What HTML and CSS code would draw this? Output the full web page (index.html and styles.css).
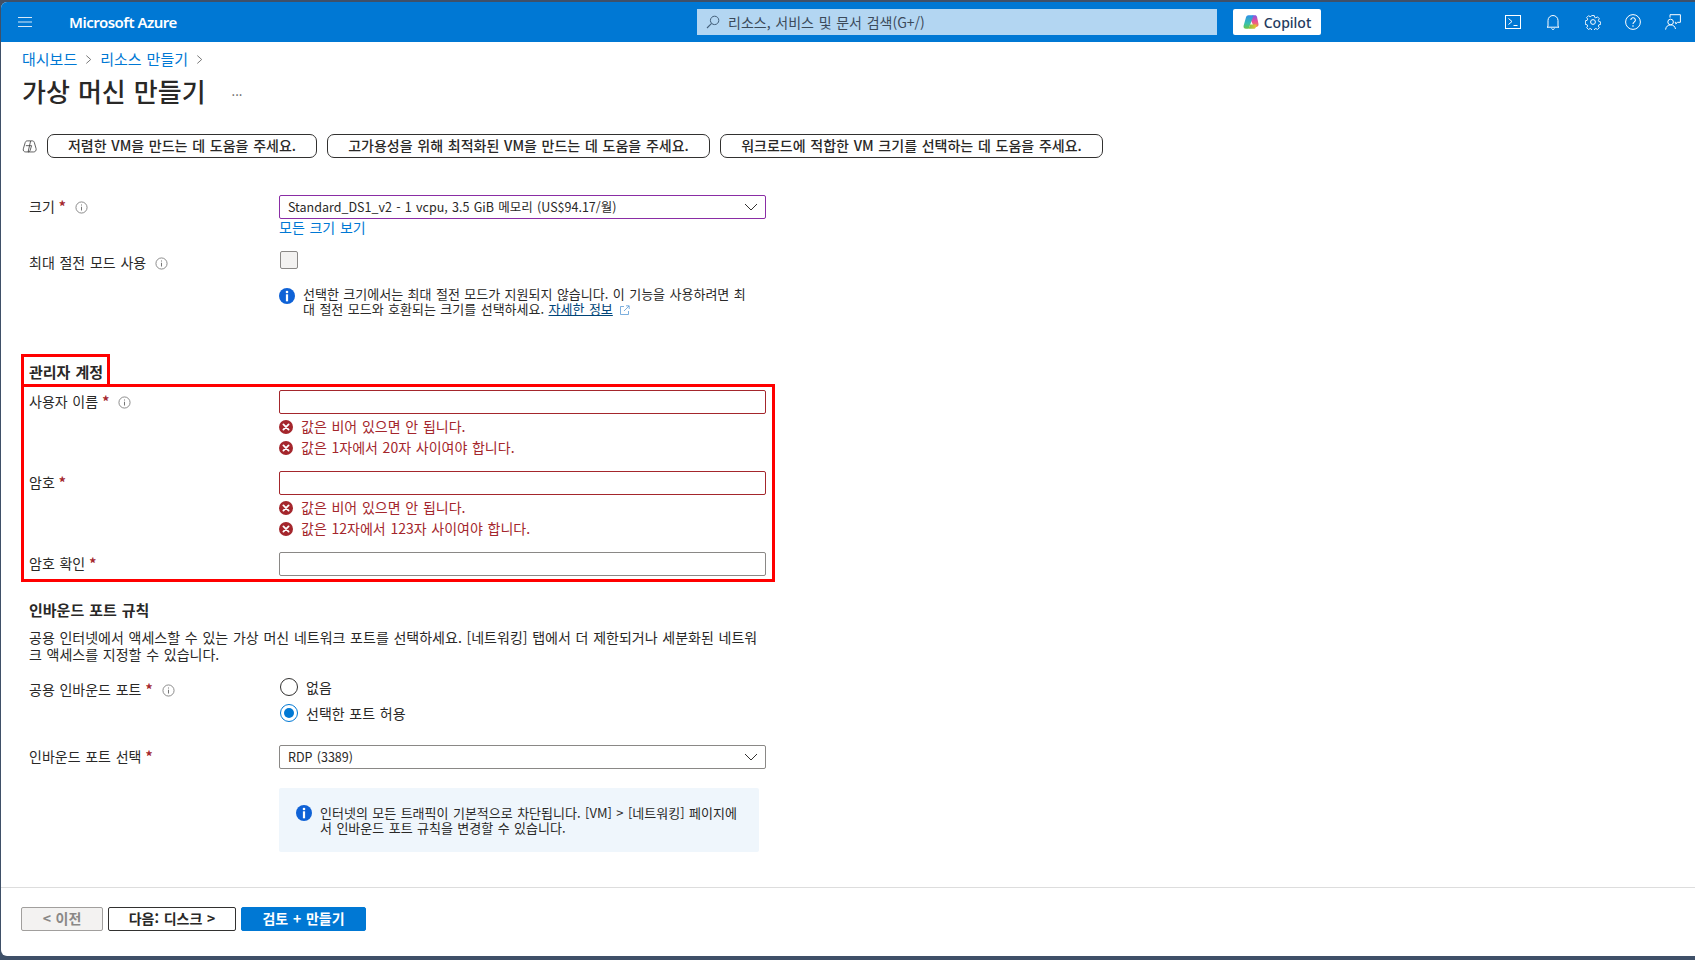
FILE: index.html
```html
<!DOCTYPE html>
<html lang="ko">
<head>
<meta charset="utf-8">
<title>가상 머신 만들기 - Microsoft Azure</title>
<link rel="stylesheet" href="styles.css">
</head>
<body>
<svg class="defs" width="0" height="0" aria-hidden="true">
  <symbol id="i-info" viewBox="0 0 14 14"><circle cx="7" cy="7" r="6" fill="none" stroke="currentColor" stroke-width="0.9"/><path d="M7 6.200v4M7 3.800v1.100" fill="none" stroke="currentColor" stroke-width="1.100"/></symbol>
  <symbol id="i-blue" viewBox="0 0 16 16"><circle cx="8" cy="8" r="8" fill="#0f62d6"/><circle cx="8" cy="4" r="1.300" fill="#fff"/><rect x="6.900" y="6.300" width="2.200" height="7" fill="#fff"/></symbol>
  <symbol id="i-err" viewBox="0 0 14 14"><circle cx="7" cy="7" r="7" fill="#a4262c"/><path d="M4.400 4.400l5.200 5.200M9.600 4.400l-5.200 5.200" stroke="#fff" stroke-width="1.800" stroke-linecap="round"/></symbol>
  <symbol id="i-chev" viewBox="0 0 14 8"><path d="M1 1l6 6 6-6" fill="none" stroke="currentColor" stroke-width="1"/></symbol>
  <symbol id="i-crumb" viewBox="0 0 8 12"><path d="M1.500 1.500l5 4.500-5 4.500" fill="none" stroke="currentColor" stroke-width="1"/></symbol>
</svg>
<div class="window">
  <header class="topbar">
    <svg class="burger" viewBox="0 0 14 10" width="14" height="10"><path d="M0 .5h14M0 5h14M0 9.500h14" stroke="#d7e9f8" stroke-width="1.200"/></svg>
    <div class="brand">Microsoft Azure</div>
    <div class="search">
      <svg viewBox="0 0 14 14" width="14" height="14"><circle cx="8.600" cy="5.400" r="4.200" fill="none" stroke="#44607a" stroke-width="1"/><path d="M5.600 8.400L1 13" stroke="#44607a" stroke-width="1.100"/></svg>
      <span>리소스, 서비스 및 문서 검색(G+/)</span>
    </div>
    <div class="copilot">
      <svg viewBox="0 0 16 16" width="16" height="16">
        <defs>
          <linearGradient id="cp-a" x1="0" y1="0" x2="0" y2="1"><stop offset="0" stop-color="#2f8fe8"/><stop offset=".6" stop-color="#37c0b0"/><stop offset="1" stop-color="#6cc644"/></linearGradient>
          <linearGradient id="cp-b" x1="0" y1="0" x2="0" y2="1"><stop offset="0" stop-color="#7b5be6"/><stop offset=".5" stop-color="#e84d9b"/><stop offset="1" stop-color="#f08a4b"/></linearGradient>
          <linearGradient id="cp-c" x1="0" y1="0" x2="1" y2="0"><stop offset="0" stop-color="#7cc443"/><stop offset="1" stop-color="#f6bd2f"/></linearGradient>
        </defs>
        <path d="M9.600 1.200H12c1 0 1.700.6 2 1.500l1.500 7.400c.3 1.500-.6 2.800-2.200 2.800H11L7.700 6z" fill="url(#cp-b)"/>
        <path d="M5.500 1.200h5L7.800 9 5.600 14.800H3C1.200 14.800.2 13.500.6 11.800L3 3.200c.3-1.200 1.300-2 2.500-2z" fill="url(#cp-a)"/>
        <path d="M5.600 14.800l1.500-4.300h6.600L13 12.900c-.4 1.200-1.300 1.900-2.500 1.900z" fill="url(#cp-c)"/>
      </svg>
      <span>Copilot</span>
    </div>
    <nav class="tools">
      <svg viewBox="0 0 16 16" width="16" height="16"><rect x=".5" y="1.500" width="15" height="13" fill="none" stroke="#fff"/><path d="M3.500 4.500l3.500 3-3.500 3M8.500 11.500h4" fill="none" stroke="#fff"/></svg>
      <svg viewBox="0 0 16 16" width="16" height="16"><path d="M3 12.500V6.500a5 5 0 0 1 10 0v6l1 .7H2zM6.500 14.500a1.700 1.700 0 0 0 3 0" fill="none" stroke="#fff"/></svg>
      <svg viewBox="0 0 16 16" width="16" height="16"><path d="M6.600 .8h2.800l.4 2 1.400.6 1.800-1.100 2 2-1.100 1.800.6 1.400 2 .4v2.800l-2 .4-.6 1.400 1.100 1.800-2 2-1.800-1.100-1.400.6-.4 2H6.600l-.4-2-1.400-.6-1.800 1.100-2-2 1.100-1.800-.6-1.400-2-.4V6.600l2-.4.6-1.400-1.100-1.800 2-2 1.800 1.100 1.400-.6z" transform="translate(.8 .8) scale(.9)" fill="none" stroke="#fff"/><circle cx="8" cy="8" r="2.400" fill="none" stroke="#fff"/></svg>
      <svg viewBox="0 0 16 16" width="16" height="16"><circle cx="8" cy="8" r="7.400" fill="none" stroke="#fff"/><path d="M5.800 6.100a2.300 2.300 0 1 1 3.400 2c-.8.5-1.200 1-1.200 2" fill="none" stroke="#fff" stroke-width="1.100"/><circle cx="8" cy="12" r=".8" fill="#fff"/></svg>
      <svg viewBox="0 0 16 16" width="16" height="16"><circle cx="5.600" cy="8" r="2.800" fill="none" stroke="#fff"/><path d="M.6 15.600c.3-3 2.300-4.700 5-4.700s4.400 1.400 4.900 4.100M5 3.600V.7h10.400v7.600h-2.800l-1.800 1.600V8.300H9.800" fill="none" stroke="#fff"/></svg>
    </nav>
  </header>

  <main class="content">
    <div class="crumbs">
      <a class="link">대시보드</a><svg class="crumb-sep" width="7" height="11"><use href="#i-crumb"/></svg>
      <a class="link">리소스 만들기</a><svg class="crumb-sep" width="7" height="11"><use href="#i-crumb"/></svg>
    </div>
    <div class="title-row"><h1>가상 머신 만들기</h1><span class="more">···</span></div>

    <div class="prompts">
      <svg class="prompt-icon" viewBox="0 0 16 16" width="15" height="15"><path d="M5.600 2h3.600l-2.700 11.800H4c-2 0-3.100-1.500-2.600-3.300l2-6.700C3.700 2.700 4.500 2 5.600 2z" fill="none" stroke="#444" stroke-width=".9"/><path d="M9.200 2h1.800c1 0 1.800.6 2.100 1.600l1.900 6.600c.5 1.900-.6 3.600-2.600 3.600H6.500c1.100 0 1.900-.7 2.200-1.700l1.500-5H4.100" fill="none" stroke="#444" stroke-width=".9"/></svg>
      <button class="prompt p1">저렴한 VM을 만드는 데 도움을 주세요.</button>
      <button class="prompt p2">고가용성을 위해 최적화된 VM을 만드는 데 도움을 주세요.</button>
      <button class="prompt p3">워크로드에 적합한 VM 크기를 선택하는 데 도움을 주세요.</button>
    </div>

    <section class="form">
      <div class="row">
        <label class="lbl">크기<span class="req">*</span><svg class="info"><use href="#i-info"/></svg></label>
        <div>
          <div class="field select purple"><span>Standard_DS1_v2 - 1 vcpu, 3.5 GiB 메모리 (US$94.17/월)</span><svg class="chev"><use href="#i-chev"/></svg></div>
          <a class="link sub">모든 크기 보기</a>
        </div>
      </div>
      <div class="row mt14">
        <label class="lbl">최대 절전 모드 사용<svg class="info"><use href="#i-info"/></svg></label>
        <div class="check"></div>
      </div>
      <div class="row note-row">
        <span></span>
        <div class="note">
          <svg class="blue"><use href="#i-blue"/></svg>
          <p>선택한 크기에서는 최대 절전 모드가 지원되지 않습니다. 이 기능을 사용하려면 최대 절전 모드와 호환되는 크기를 선택하세요. <a class="plain">자세한 정보</a> <svg class="ext" viewBox="0 0 10 10" width="10" height="10"><path d="M4 1.500H.5v8h8V6M4 6l5-5M6 .8h3.200V4" fill="none" stroke="#5b9bd5" stroke-width=".8"/></svg></p>
        </div>
      </div>

      <div class="annot">
        <h2 class="annot-title">관리자 계정</h2>
        <div class="annot-box">
          <div class="row">
            <label class="lbl">사용자 이름<span class="req">*</span><svg class="info"><use href="#i-info"/></svg></label>
            <div>
              <div class="field bad"></div>
              <div class="err first"><svg><use href="#i-err"/></svg>값은 비어 있으면 안 됩니다.</div>
              <div class="err"><svg><use href="#i-err"/></svg>값은 1자에서 20자 사이여야 합니다.</div>
            </div>
          </div>
          <div class="row mt13">
            <label class="lbl">암호<span class="req">*</span></label>
            <div>
              <div class="field bad"></div>
              <div class="err first"><svg><use href="#i-err"/></svg>값은 비어 있으면 안 됩니다.</div>
              <div class="err"><svg><use href="#i-err"/></svg>값은 12자에서 123자 사이여야 합니다.</div>
            </div>
          </div>
          <div class="row mt13">
            <label class="lbl">암호 확인<span class="req">*</span></label>
            <div class="field"></div>
          </div>
        </div>
      </div>

      <h2 class="sect">인바운드 포트 규칙</h2>
      <p class="para">공용 인터넷에서 액세스할 수 있는 가상 머신 네트워크 포트를 선택하세요. [네트워킹] 탭에서 더 제한되거나 세분화된 네트워크 액세스를 지정할 수 있습니다.</p>
      <div class="row mt15">
        <label class="lbl">공용 인바운드 포트<span class="req">*</span><svg class="info"><use href="#i-info"/></svg></label>
        <div class="radios">
          <div class="radio-row"><span class="radio"></span>없음</div>
          <div class="radio-row"><span class="radio on"></span>선택한 포트 허용</div>
        </div>
      </div>
      <div class="row mt23">
        <label class="lbl">인바운드 포트 선택<span class="req">*</span></label>
        <div class="field select"><span>RDP (3389)</span><svg class="chev"><use href="#i-chev"/></svg></div>
      </div>
      <div class="row mt19">
        <span></span>
        <div class="callout">
          <svg class="blue"><use href="#i-blue"/></svg>
          <p>인터넷의 모든 트래픽이 기본적으로 차단됩니다. [VM] &gt; [네트워킹] 페이지에서 인바운드 포트 규칙을 변경할 수 있습니다.</p>
        </div>
      </div>
    </section>
  </main>

  <footer class="actions">
    <button class="btn prev">&lt; 이전</button>
    <button class="btn next">다음: 디스크 &gt;</button>
    <button class="btn primary">검토 + 만들기</button>
  </footer>
</div>
</body>
</html>
```

FILE: styles.css
```css
* { box-sizing: border-box; }
html, body { margin: 0; height: 100%; }
body {
  background: #3f5068;
  font-family: "Noto Sans CJK KR", sans-serif;
  font-size: 14px;
  word-spacing: 0.800px;
  color: #292827;
  overflow: hidden;
}
.defs { position: absolute; }
.window {
  margin: 2px 0 0 1px;
  height: 954px;
  background: #fff;
  border-radius: 6px 0 0 6px;
  display: flex;
  flex-direction: column;
  overflow: hidden;
}
.topbar {
  height: 40px;
  flex: none;
  background: #0078d4;
  display: flex;
  align-items: center;
  color: #fff;
}
.burger { margin-left: 17px; flex: none; }
.brand { margin-left: 37px; width: 628px; font-family: "Noto Sans", sans-serif; font-size: 15px; font-weight: 600; letter-spacing: -0.500px; word-spacing: 0; }
.search {
  width: 520px;
  height: 26px;
  background: #b3d6f2;
  display: flex;
  align-items: center;
  gap: 8px;
  padding-left: 9px;
  color: #3b4a5a;
}
.copilot {
  margin-left: 16px;
  width: 88px;
  height: 26px;
  background: #fff;
  border-radius: 2px;
  display: flex;
  align-items: center;
  justify-content: center;
  gap: 5px;
  font-family: "Noto Sans", sans-serif;
  color: #243a5e;
  font-size: 14px;
  font-weight: 500;
}
.tools { margin-left: 184px; display: flex; gap: 24px; }
.content { flex: 1; }
.link { color: #0078d4; }
.crumbs { margin: 7px 0 0 21px; height: 20px; line-height: 20px; font-size: 15px; display: flex; align-items: center; }
.crumb-sep { margin: 1px 8px 0 8px; color: #666; }
.title-row { margin: 7px 0 0 21px; height: 32px; display: flex; align-items: center; }
h1 { margin: -2px 0 0; font-size: 26px; line-height: 32px; font-weight: 500; color: #292827; }
.more { margin-left: 26px; margin-top: 4px; font-size: 13px; color: #605e5c; }
.prompts { margin: 26px 0 0 21px; display: flex; align-items: center; }
.prompt-icon { margin-right: 10px; flex: none; }
.prompt {
  height: 24px;
  margin-right: 10px;
  padding: 0 0 2px;
  background: #fff;
  border: 1px solid #323130;
  border-radius: 7px;
  font: 500 14px/20px "Noto Sans CJK KR", sans-serif;
  word-spacing: 0.800px;
  color: #292827;
}
.p1 { width: 270px; }
.p2 { width: 383px; }
.p3 { width: 383px; }
.form { margin: 37px 0 0 28px; width: 746px; }
.row { display: grid; grid-template-columns: 250px 487px; }
.mt13 { margin-top: 13px; }
.mt14 { margin-top: 14px; }
.mt15 { margin-top: 15px; }
.mt19 { margin-top: 19px; }
.mt23 { margin-top: 23px; }
.lbl { line-height: 20px; display: flex; align-items: center; height: 24px; padding-bottom: 2px; }
.req { color: #a4262c; margin-left: 4px; font-weight: 700; }
.info { width: 13px; height: 13px; margin-left: 9px; margin-top: 2px; color: #767676; }
.field {
  height: 24px;
  border: 1px solid #8a8886;
  border-radius: 2px;
  background: #fff;
}
.field.bad { border-color: #a4262c; }
.field.purple { border-color: #8a2da5; }
.select { display: flex; align-items: center; justify-content: space-between; padding: 0 7px 2px 8px; font-size: 12.500px; }
.chev { width: 14px; height: 8px; margin-top: 2px; color: #323130; }
.sub { display: block; line-height: 18px; margin: -1px 0 1px; }
.check { width: 18px; height: 18px; margin-left: 1px; background: #f3f2f1; border: 1px solid #8a8886; border-radius: 2px; }
.note-row { margin-top: 13px; }
.note { display: flex; gap: 8px; }
.blue { width: 16px; height: 16px; flex: none; }
.note p { margin: -2px 0 2px; width: 450px; font-size: 13px; line-height: 15px; }
.plain { color: #004578; text-decoration: underline; }
.ext { vertical-align: -1px; margin-left: 3px; }
.annot { margin: 36px 0 0 -8px; }
.annot-title {
  display: flex;
  align-items: center;
  width: 89px;
  height: 30px;
  margin: 0;
  padding: 2px 0 0 5px;
  border: 3px solid #f00;
  border-bottom: 0;
  font-size: 15px;
  font-weight: 700;
  line-height: 20px;
  white-space: nowrap;
}
.annot-box {
  width: 754px;
  padding: 3px 6px 3px 5px;
  border: 3px solid #f00;
}
.err { display: flex; align-items: center; height: 20px; padding-bottom: 2px; margin-top: 1px; color: #a4262c; }
.err.first { margin-top: 3px; }
.err svg { width: 14px; height: 14px; margin: 2px 8px 0 0; flex: none; }
.sect { margin: 18px 0 1px; font-size: 15px; font-weight: 700; line-height: 20px; }
.para { margin: 9px 0 1px; width: 737px; line-height: 17px; }
.radios { display: flex; flex-direction: column; gap: 8px; padding-left: 1px; }
.radio-row { display: flex; align-items: center; height: 18px; gap: 8px; line-height: 16px; }
.radio { width: 18px; height: 18px; border: 1px solid #323130; border-radius: 50%; background: #fff; }
.radio.on { border-color: #0078d4; position: relative; }
.radio.on::after { content: ""; position: absolute; left: 3px; top: 3px; width: 10px; height: 10px; border-radius: 50%; background: #0078d4; }
.callout {
  width: 480px;
  height: 64px;
  padding: 17px 17px 0;
  background: #eff6fc;
  border-radius: 2px;
  display: flex;
  gap: 8px;
}
.callout p { margin: 0; font-size: 13px; line-height: 15px; }
.actions {
  flex: none;
  height: 69px;
  border-top: 1px solid #ddd;
  padding: 19px 0 0 20px;
  display: flex;
  align-items: flex-start;
  gap: 5px;
}
.btn {
  height: 24px;
  padding: 0 0 2px;
  border-radius: 2px;
  font: 700 14px/20px "Noto Sans CJK KR", sans-serif;
  word-spacing: 0.800px;
}
.prev { width: 82px; background: #f3f2f1; border: 1px solid #a19f9d; color: #8a8886; }
.next { width: 128px; background: #fff; border: 1px solid #323130; color: #292827; }
.primary { width: 125px; background: #0078d4; border: 1px solid #0078d4; color: #fff; }
```
